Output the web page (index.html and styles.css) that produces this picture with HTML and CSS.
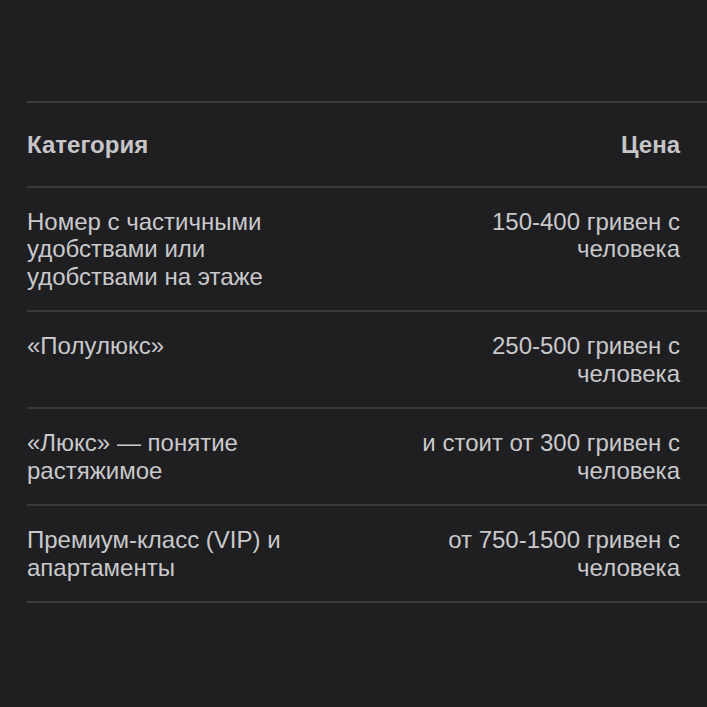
FILE: index.html
```html
<!DOCTYPE html>
<html lang="ru">
<head>
<meta charset="utf-8">
<link rel="stylesheet" href="styles.css">
</head>
<body>
<div class="page">
  <div class="table">
    <div class="row head">
      <div class="cell left">Категория</div>
      <div class="cell right">Цена</div>
    </div>
    <div class="row">
      <div class="cell left">Номер с частичными удобствами или удобствами на этаже</div>
      <div class="cell right">150-400 гривен с человека</div>
    </div>
    <div class="row">
      <div class="cell left">«Полулюкс»</div>
      <div class="cell right">250-500 гривен с человека</div>
    </div>
    <div class="row">
      <div class="cell left">«Люкс» — понятие растяжимое</div>
      <div class="cell right">и стоит от 300 гривен с человека</div>
    </div>
    <div class="row last">
      <div class="cell left">Премиум-класс (VIP) и апартаменты</div>
      <div class="cell right">от 750-1500 гривен с человека</div>
    </div>
  </div>
</div>
</body>
</html>
```
FILE: styles.css
```css
html, body {
  margin: 0;
  padding: 0;
  background: #1f1f22;
}
body {
  width: 707px;
  height: 707px;
  overflow: hidden;
  font-family: "Liberation Sans", Arial, sans-serif;
  color: #c9c9cb;
}
.page {
  padding-top: 101px;
  padding-left: 27px;
}
.table {
  border-top: 2px solid #3a3a3d;
}
.row {
  display: grid;
  grid-template-columns: 1fr 1fr;
  column-gap: 93px;
  padding: 20px 27px 20px 0;
  border-bottom: 2px solid #3a3a3d;
  font-size: 24px;
  line-height: 27.5px;
}
.row.head {
  padding-top: 28px;
  padding-bottom: 27px;
  font-weight: bold;
  color: #c6c6c8;
}
.cell.right {
  text-align: right;
}
```
